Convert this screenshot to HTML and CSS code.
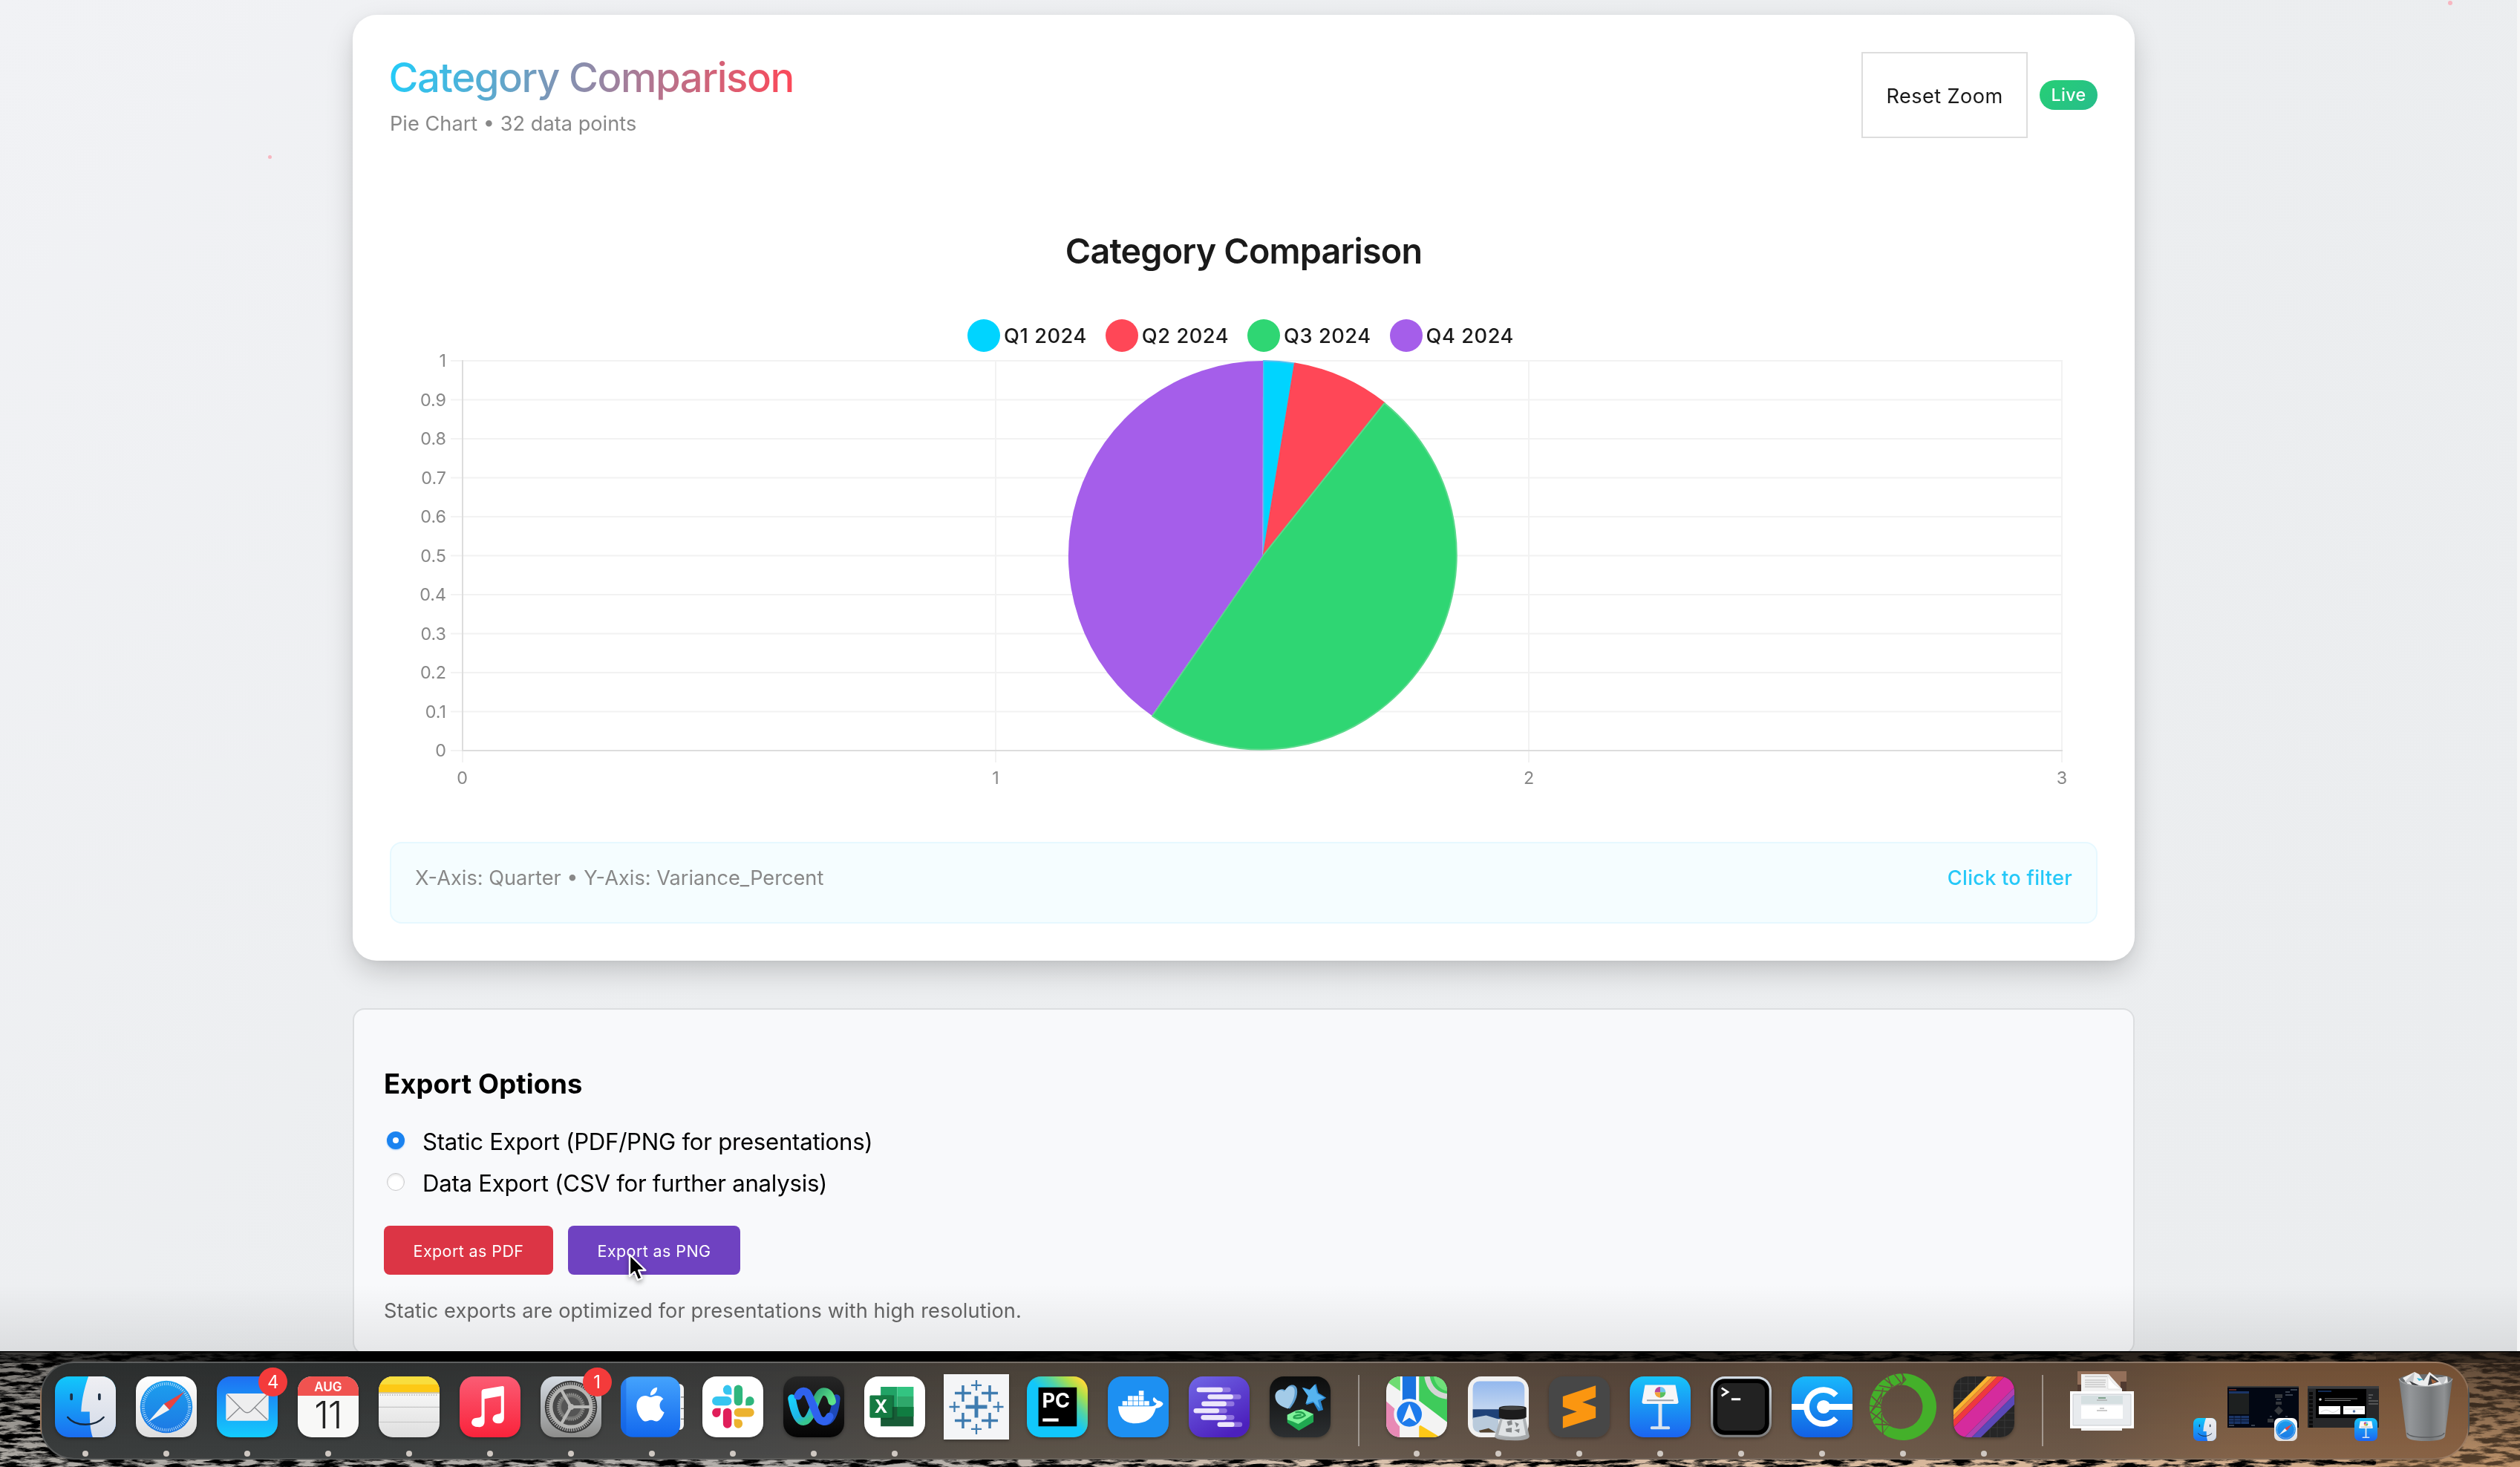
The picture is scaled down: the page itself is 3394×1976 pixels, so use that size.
FILE: index.html
```html
<!DOCTYPE html>
<html lang="en">
<head>
<meta charset="utf-8">
<title>Category Comparison</title>
<link rel="stylesheet" href="styles.css">
</head>
<body>
<main class="window">
  <span class="speck speck-left"></span>
  <span class="speck speck-right"></span>
  <section class="card">
    <header class="card-header">
      <div class="heading">
        <h1 class="title">Category Comparison</h1>
        <p class="subtitle">Pie Chart • 32 data points</p>
      </div>
      <div class="actions">
        <button class="reset">Reset Zoom</button>
        <span class="live">Live</span>
      </div>
    </header>
    <h2 class="chart-title">Category Comparison</h2>
    <ul class="legend">
      <li class="key"><i class="swatch cyan"></i>Q1 2024</li>
      <li class="key"><i class="swatch red"></i>Q2 2024</li>
      <li class="key"><i class="swatch green"></i>Q3 2024</li>
      <li class="key"><i class="swatch purple"></i>Q4 2024</li>
    </ul>
    <svg class="plot" viewBox="525 474 2300 606">
      <g class="grid">
        <path d="M607 486H2778M607 538.5H2778M607 591H2778M607 643.5H2778M607 696H2778M607 748.5H2778M607 801H2778M607 853.5H2778M607 906H2778M607 958.5H2778M607 1011H2778"/>
        <path d="M623 486V1027M1341 486V1027M2059 486V1027M2777 486V1027"/>
      </g>
      <path class="axis" d="M623 485V1011H2778"/>
      <g class="ticks ticks-y">
        <text x="601" y="494">1</text><text x="601" y="546.5">0.9</text><text x="601" y="599">0.8</text><text x="601" y="651.5">0.7</text><text x="601" y="704">0.6</text><text x="601" y="756.5">0.5</text><text x="601" y="809">0.4</text><text x="601" y="861.5">0.3</text><text x="601" y="914">0.2</text><text x="601" y="966.5">0.1</text><text x="601" y="1019">0</text>
      </g>
      <g class="ticks ticks-x">
        <text x="622.5" y="1056">0</text><text x="1341" y="1056">1</text><text x="2059" y="1056">2</text><text x="2777" y="1056">3</text>
      </g>
      <g class="slices">
        <path fill="#00d4ff" stroke="#4fc0f2" d="M1701.5 748.5V486A262.5 262.5 0 0 1 1743.9 489.5Z"/>
        <path fill="#ff4757" stroke="#ff4757" d="M1701.5 748.5L1743.9 489.5A262.5 262.5 0 0 1 1864.9 543.1Z"/>
        <path fill="#2fd673" stroke="#5bd98c" d="M1701 748.5L1864.5 543.1A262.5 262.5 0 0 1 1551.9 964.3Z"/>
        <path fill="#a55eea" d="M1700.5 748.5L1551.2 963.8A262.5 262.5 0 0 1 1701 486Z"/>
      </g>
    </svg>
    <div class="info">
      <span class="axes">X-Axis: Quarter • Y-Axis: Variance_Percent</span>
      <span class="filter">Click to filter</span>
    </div>
  </section>

  <section class="export">
    <h3 class="export-title">Export Options</h3>
    <label class="option"><i class="radio checked"></i>Static Export (PDF/PNG for presentations)</label>
    <label class="option"><i class="radio"></i>Data Export (CSV for further analysis)</label>
    <div class="buttons">
      <button class="btn pdf">Export as PDF</button>
      <button class="btn png">Export as PNG</button>
    </div>
    <p class="note">Static exports are optimized for presentations with high resolution.</p>
  </section>
  <svg class="cursor" viewBox="0 0 28 40"><path d="M2 2V31L8.6 25.2L13 36L18.6 33.6L14 23H23.4Z"/></svg>
</main>

<footer class="desktop">
  <svg class="wallpaper" viewBox="0 0 3394 156" preserveAspectRatio="none">
    <defs>
      <filter id="rock" x="0" y="0" width="100%" height="100%" color-interpolation-filters="sRGB">
        <feTurbulence type="fractalNoise" baseFrequency="0.035 0.17" numOctaves="5" seed="8"/>
        <feColorMatrix values="4.6 0 0 0 -1.75  4.6 0 0 0 -1.75  4.6 0 0 0 -1.75  0 0 0 0 1"/>
      </filter>
      <linearGradient id="tone"><stop offset="0" stop-color="#b0aca6"/><stop offset=".35" stop-color="#b4b0ac"/><stop offset=".55" stop-color="#dcc4ae"/><stop offset=".85" stop-color="#d8b595"/><stop offset="1" stop-color="#c29a74"/></linearGradient>
      <linearGradient id="shade"><stop offset="0" stop-opacity=".45"/><stop offset=".1" stop-opacity=".82"/><stop offset=".14" stop-opacity="1"/><stop offset=".38" stop-opacity="1"/><stop offset=".5" stop-opacity=".86"/><stop offset=".85" stop-opacity=".72"/><stop offset="1" stop-opacity=".35"/></linearGradient>
      <linearGradient id="veil" x2="0" y2="1"><stop offset="0" stop-opacity=".35"/><stop offset="1" stop-opacity="0"/></linearGradient>
      <linearGradient id="brown" x2="0" y2="1"><stop offset="0" stop-color="#5a4333" stop-opacity=".6"/><stop offset="1" stop-color="#b98a5e" stop-opacity=".45"/></linearGradient>
    </defs>
    <rect width="3394" height="156" filter="url(#rock)"/>
    <rect class="multiply" width="3394" height="156" fill="url(#tone)"/>
    <rect x="3200" width="194" height="156" fill="url(#brown)"/>
    <rect width="3394" height="156" fill="url(#veil)"/>
    <rect width="3394" height="16" fill="url(#shade)"/>
    <rect width="3394" height="1.5"/>
  </svg>

  <svg class="defs" width="0" height="0">
    <defs>
      <linearGradient id="gFinder" x2="0" y2="1"><stop offset="0" stop-color="#12c8fb"/><stop offset="1" stop-color="#1b6df0"/></linearGradient>
      <linearGradient id="gFace" x2="0" y2="1"><stop offset="0" stop-color="#efeff3"/><stop offset="1" stop-color="#d3dbe8"/></linearGradient>
      <linearGradient id="gWhite" x2="0" y2="1"><stop offset="0" stop-color="#fff"/><stop offset="1" stop-color="#dedede"/></linearGradient>
      <linearGradient id="gBlue" x2="0" y2="1"><stop offset="0" stop-color="#1ca0ee"/><stop offset="1" stop-color="#1d78e4"/></linearGradient>
      <linearGradient id="gMail" x2="0" y2="1"><stop offset="0" stop-color="#1e6ff2"/><stop offset="1" stop-color="#14ccfd"/></linearGradient>
      <linearGradient id="gKey" x2="0" y2="1"><stop offset="0" stop-color="#18c4f9"/><stop offset="1" stop-color="#1b64f0"/></linearGradient>
      <linearGradient id="gMusic" x2="0" y2="1"><stop offset="0" stop-color="#fb5c74"/><stop offset="1" stop-color="#fa233b"/></linearGradient>
      <linearGradient id="gGear" x2="0" y2="1"><stop offset="0" stop-color="#d5dbe3"/><stop offset="1" stop-color="#8d8d8b"/></linearGradient>
      <linearGradient id="gBook" x2="0" y2="1"><stop offset="0" stop-color="#44a3fd"/><stop offset="1" stop-color="#1268ee"/></linearGradient>
      <linearGradient id="gDark" x2="0" y2="1"><stop offset="0" stop-color="#262626"/><stop offset="1" stop-color="#040404"/></linearGradient>
      <linearGradient id="gDark2" x2="0" y2="1"><stop offset="0" stop-color="#0c0d0d"/><stop offset="1" stop-color="#2c2f31"/></linearGradient>
      <linearGradient id="gPy" x1="0" y1="1" x2="1" y2="0"><stop offset=".5" stop-color="#11c7fb"/><stop offset=".66" stop-color="#4fd3a8"/><stop offset=".8" stop-color="#a9df4e"/><stop offset=".92" stop-color="#fbd93a"/></linearGradient>
      <linearGradient id="gViolet" x2=".6" y2="1"><stop offset="0" stop-color="#7167e6"/><stop offset="1" stop-color="#4c20bd"/></linearGradient>
      <linearGradient id="gSky" x2="0" y2="1"><stop offset="0" stop-color="#93b8ee"/><stop offset="1" stop-color="#c3d6f0"/></linearGradient>
      <linearGradient id="gSteel" x2="0" y2="1"><stop offset="0" stop-color="#d4dde6"/><stop offset="1" stop-color="#7b7b7b"/></linearGradient>
      <linearGradient id="gC" x2="0" y2="1"><stop offset="0" stop-color="#18b8fc"/><stop offset="1" stop-color="#1260e4"/></linearGradient>
      <linearGradient id="gBin"><stop offset="0" stop-color="#75787a"/><stop offset=".2" stop-color="#94979a"/><stop offset=".6" stop-color="#747779"/><stop offset=".85" stop-color="#909294"/><stop offset="1" stop-color="#666869"/></linearGradient>
      <linearGradient id="gWave1" x2=".6" y2="1"><stop offset="0" stop-color="#18d2fb"/><stop offset=".7" stop-color="#1fb5e8"/><stop offset="1" stop-color="#37c58e"/></linearGradient>
      <linearGradient id="gWave3" x2="1" y2=".6"><stop offset="0" stop-color="#2a9e72"/><stop offset="1" stop-color="#5ee58a"/></linearGradient>
    </defs>
    <symbol id="finder" viewBox="0 0 100 100">
      <path fill="url(#gFinder)" d="M0 0H100V100H0Z"/>
      <path fill="url(#gFace)" d="M55 0C49 17 44 36 43 58H57C57 74 58 88 62 100H100V0Z"/>
      <path fill="none" stroke="#1d2f44" stroke-width="4.5" stroke-linecap="round" d="M27 30V37M73 30V37"/>
      <path fill="none" stroke="#16283c" stroke-width="3" stroke-linecap="round" d="M21 67C34 83 66 83 80 67"/>
    </symbol>
    <symbol id="safari" viewBox="0 0 100 100">
      <path fill="url(#gWhite)" d="M0 0H100V100H0Z"/>
      <circle cx="50" cy="50" r="43" fill="url(#gBlue)"/>
      <circle cx="50" cy="50" r="38" fill="none" stroke="#cde8fb" stroke-width="5" stroke-dasharray="1 2.3"/>
      <path fill="#e8433f" d="M80 25L46 45L55 55Z"/>
      <path fill="#f2f2f2" d="M20 75L46 45L55 55Z"/>
    </symbol>
    <symbol id="keynote" viewBox="0 0 100 100">
      <path fill="url(#gKey)" d="M0 0H100V100H0Z"/>
      <path fill="#dfe6ee" d="M47 44H53V84H47Z"/><rect x="34" y="82" width="32" height="5" rx="2" fill="#d9e3ee"/>
      <path fill="#f6f6f8" d="M25 14H75L80 42Q80 45 77 45H23Q20 45 20 42Z"/><path fill="#9aa3ad" d="M28 38H72V40.500H28Z"/>
      <path fill="#6ec6f0" d="M50 26V17A9 9 0 0 1 59 26Z"/><path fill="#58c060" d="M50 26H59A9 9 0 0 1 50 35Z"/><path fill="#f2a33a" d="M50 26V35A9 9 0 0 1 41 26Z"/><path fill="#b8479a" d="M50 26H41A9 9 0 0 1 50 17Z"/>
    </symbol>
  </svg>

  <nav class="dock">
    <div class="app"><svg class="icon"><use href="#finder"/></svg><i class="dot"></i></div>
    <div class="app"><svg class="icon"><use href="#safari"/></svg><i class="dot"></i></div>
    <div class="app"><svg class="icon" viewBox="0 0 100 100"><path fill="url(#gMail)" d="M0 0H100V100H0Z"/><rect x="15" y="28" width="70" height="45" rx="4" fill="#eeeeef"/><path fill="none" stroke="#8b8d91" stroke-width="1.800" d="M17 71L38 51M83 71L62 51M17 30L44 57Q50 62 56 57L83 30"/></svg><b class="badge">4</b><i class="dot"></i></div>
    <div class="app"><div class="icon calendar"><span class="month">AUG</span><span class="day">11</span></div><i class="dot"></i></div>
    <div class="app"><svg class="icon" viewBox="0 0 100 100"><path fill="url(#gWhite)" d="M0 0H100V100H0Z"/><path fill="#fdc915" d="M0 0H100V26H0Z"/><path fill="#f8de3e" d="M0 0H100V13H0Z"/><path stroke="#b8a877" stroke-width="1.500" d="M0 27H100"/><path stroke="#a9a9a9" stroke-width="2" stroke-dasharray="1.500 2.500" d="M2 30.500H98"/><path stroke="#c6c6c6" stroke-width="1.500" d="M0 50.500H100M0 75H100"/></svg><i class="dot"></i></div>
    <div class="app"><svg class="icon" viewBox="0 0 100 100"><path fill="url(#gMusic)" d="M0 0H100V100H0Z"/><path fill="#fff" d="M36 25Q36 22 39 21L70 16Q73 15.500 73 18V68C73 76 67 78 62 77C54 76 52 69 57 64C61 61 68 63 68 58V32L41 37V74C41 81 36 84 29 83C20 82 17 76 22 70C27 66 36 70 36 63Z"/></svg><i class="dot"></i></div>
    <div class="app"><svg class="icon" viewBox="0 0 100 100"><path fill="url(#gGear)" d="M0 0H100V100H0Z"/><circle cx="50" cy="50" r="43" fill="#3a3a3a"/><circle cx="50" cy="50" r="38" fill="none" stroke="#aaa" stroke-width="5" stroke-dasharray="1.800 1.800"/><circle cx="50" cy="50" r="33" fill="#484848" stroke="#b4b4b2" stroke-width="6"/><circle cx="50" cy="50" r="21" fill="#747472" stroke="#8c8c8a" stroke-width="4" stroke-dasharray="2 1.500"/><circle cx="50" cy="50" r="16" fill="#555"/><path stroke="#b9b9b7" stroke-width="5" d="M50 50H82M50 50L34 22M50 50L34 78"/><circle cx="50" cy="50" r="5" fill="#b9b9b7"/></svg><b class="badge">1</b><i class="dot"></i></div>
    <div class="app"><svg class="icon book" viewBox="0 0 104 100"><rect x="70" y="12" width="34" height="76" rx="8" fill="#f2f2f2"/><path stroke="#777" stroke-width="1.500" d="M99 34H104M99 53H104M99 70H104"/><rect width="98" height="100" rx="20" fill="url(#gBook)"/><path fill="#0f5cdc" opacity=".45" d="M9 4V96Q0 92 0 80V20Q0 8 9 4Z"/><path fill="#fff" transform="translate(21 18) scale(2.330)" d="M12.152 6.896c-.948 0-2.415-1.078-3.960-1.040-2.040.027-3.910 1.183-4.961 3.014-2.117 3.675-.546 9.103 1.519 12.090 1.013 1.454 2.208 3.090 3.792 3.039 1.520-.065 2.090-.987 3.935-.987 1.831 0 2.350.987 3.960.948 1.637-.026 2.676-1.480 3.676-2.948 1.156-1.688 1.636-3.325 1.662-3.415-.039-.013-3.182-1.221-3.220-4.857-.026-3.040 2.480-4.494 2.597-4.559-1.429-2.090-3.623-2.324-4.390-2.376-2-.156-3.675 1.090-4.610 1.090zM15.530 3.830c.843-1.012 1.400-2.427 1.245-3.830-1.207.052-2.662.805-3.532 1.818-.780.896-1.454 2.338-1.273 3.714 1.338.104 2.715-.688 3.559-1.701"/></svg><i class="dot"></i></div>
    <div class="app"><svg class="icon" viewBox="0 0 100 100"><path fill="#fff" d="M0 0H100V100H0Z"/><g fill="#36c5f0"><path d="M48 30H41A7 8 0 1 1 48 22Z"/><rect x="16" y="33" width="32" height="15" rx="7.500"/></g><g fill="#2eb67d"><rect x="52" y="14" width="14" height="34" rx="7"/><path d="M71 48V40.500A7 7.500 0 1 1 78 48Z"/></g><g fill="#e01e5a"><path d="M30 52V59.500A7 7.500 0 1 1 23 52Z"/><rect x="34" y="52" width="14" height="33" rx="7"/></g><g fill="#ecb22e"><rect x="52" y="52" width="33" height="14.500" rx="7.200"/><path d="M52 70H59A7 7.500 0 1 1 52 77.500Z"/></g></svg><i class="dot"></i></div>
    <div class="app"><svg class="icon" viewBox="0 0 100 100"><path fill="url(#gDark)" d="M0 0H100V100H0Z"/><g fill="none" stroke-width="13" stroke-linecap="round"><path stroke="#1d49b8" d="M87 36C85 58 79 74 68 74"/><path stroke="url(#gWave3)" d="M50 50C56 34 60 25 66 25C74 25 78 31 80 41"/><path stroke="url(#gWave1)" d="M14 36C18 60 24 74 33 74C41 74 46 62 51 48"/><path stroke="#2f62ee" d="M24 32C28 23 38 20 43 34L55 63C59 75 70 78 76 66"/></g></svg><i class="dot"></i></div>
    <div class="app"><svg class="icon" viewBox="0 0 100 100"><path fill="#fff" d="M0 0H100V100H0Z"/><path fill="#21a366" d="M27 17H54V50H27Z"/><path fill="#33c481" d="M54 17H81V33H54Z"/><path fill="#2fa86b" d="M54 33H81V50H54Z"/><path fill="#185c37" d="M27 50H81V82H27Z"/><path fill="#107c41" d="M54 50H81V66H54Z"/><path fill="#0b4a28" d="M27 31H49V71H27Z" opacity=".6"/><rect x="9" y="31" width="37" height="37" rx="2" fill="#157a42"/><text class="glyph" x="27.500" y="60" font-size="29">X</text></svg><i class="dot"></i></div>
    <div class="app"><svg class="icon square" viewBox="0 0 100 100"><path fill="#f4f5f7" d="M0 0H100V100H0Z"/><g stroke="#3f7cb0" fill="none"><path stroke-width="5.600" d="M33.500 50H66.500M50 33.500V66.500"/><path stroke-width="4" d="M17 29H42M29.500 17V42M58 29H83M70.500 17V42M17 71H42M29.500 59V83M58 71H83M70.500 59V83"/><path stroke-width="2.600" d="M42 17H58M50 9V25M42 84H58M50 76V92M8.500 50H24.500M16.500 42V58M75.500 50H91.500M83.500 42V58"/></g></svg></div>
    <div class="app"><svg class="icon" viewBox="0 0 100 100"><path fill="url(#gPy)" d="M0 0H100V100H0Z"/><path d="M19 18H82V82H19Z"/><path fill="#fff" d="M26 69H52V74H26Z"/><text class="glyph" x="48" y="51" font-size="33">PC</text></svg></div>
    <div class="app"><svg class="icon" viewBox="0 0 100 100"><path fill="#1d90f2" d="M0 0H100V100H0Z"/><g fill="#fff"><path d="M17 49H72C77 49 80 46 80 44C73 42 73 36 76 34L82 40C86 40 90 42 91 45C88 51 82 52 79 52C74 70 62 77 44 77C28 77 18 68 17 49Z"/><path d="M24 40.500H32V48H24ZM33 40.500H41V48H33ZM42 40.500H50V48H42ZM51 40.500H59V48H51ZM60 40.500H68V48H60ZM33 32H41V39.500H33ZM42 32H50V39.500H42ZM51 32H59V39.500H51ZM51 23.500H59V31H51Z"/></g></svg></div>
    <div class="app"><svg class="icon" viewBox="0 0 100 100"><path fill="url(#gViolet)" d="M0 0H100V100H0Z"/><g fill="#a48be8" opacity=".75"><rect x="30" y="18" width="39" height="8" rx="4"/><rect x="45" y="29.500" width="41" height="8" rx="4"/><rect x="35" y="41" width="40" height="8" rx="4"/><rect x="25" y="52.500" width="38" height="8" rx="4"/><rect x="35" y="63.500" width="40" height="8" rx="4"/><rect x="55" y="75" width="33" height="8" rx="4"/></g><g fill="#ece6fb"><rect x="13" y="18" width="43" height="8" rx="4"/><rect x="31" y="29.500" width="42" height="8" rx="4"/><rect x="21" y="41" width="41" height="8" rx="4"/><rect x="8" y="52.500" width="42" height="8" rx="4"/><rect x="20" y="63.500" width="42" height="8" rx="4"/><rect x="47" y="75" width="28" height="8" rx="4"/></g></svg></div>
    <div class="app"><svg class="icon" viewBox="0 0 100 100"><path fill="url(#gDark2)" d="M0 0H100V100H0Z"/><path fill="#5f9fd0" d="M33 53C18 49 10 41 11 30C12 21 21 19 26 23C30 12 43 11 45 21C47 33 40 45 33 53Z"/><path fill="#a3cbe8" d="M30 53C16 49 9 42 9 32C10 22 19 20 24 25C29 14 40 14 41 23C42 34 36 46 30 53Z"/><path fill="#2a86cf" d="M55 18L67 22L76 12L80 27L93 35L84 41L88 55L80 57L72 43L60 47L64 33Z"/><path fill="#56b4f0" d="M53 18L65 23L74 13L78 28L90 35L79 39L83 53L71 41L59 45L63 32Z"/><path fill="#1fa850" d="M29 63V76L48 89L72 75V62Z"/><path fill="#7ff29a" d="M29 63L43 56L54 54L72 62L52 75L47 78L38 74L29 71Z"/><path fill="none" stroke="#24a350" stroke-width="3" d="M42 59Q55 57 58 64Q50 70 40 68Q38 64 52 63"/></svg></div>
    <i class="divider"></i>
    <div class="app"><svg class="icon" viewBox="0 0 100 100"><path fill="#f3f3f3" d="M0 0H100V100H0Z"/><path fill="#6fdc72" d="M0 0H23V24L0 8Z"/><path fill="#3fcb5b" d="M54 0H100V75L54 40Z"/><path fill="#6fe07a" d="M78 0H100V24Q82 20 78 0Z"/><path fill="none" stroke="#d5d5d5" stroke-width="9" d="M67 0Q72 29 100 33"/><path fill="#1a73e0" d="M26 0H49V55H26Z"/><path stroke="#fff" stroke-width="3" d="M25 0V42M51 0V42"/><path fill="#e889b5" d="M0 41L22 60V100H0Z"/><path fill="#fdc817" d="M54 79L89 100H54Z"/><circle cx="38" cy="62" r="23" fill="#1d7bec" stroke="#f2f4f7" stroke-width="5"/><path fill="#f5f7fa" d="M38 45L50 76L38 68L26 76Z"/></svg><i class="dot"></i></div>
    <div class="app"><svg class="icon loupe" viewBox="0 0 100 106"><rect width="100" height="100" rx="22" fill="#f1f1f1"/><path fill="url(#gSky)" d="M20 8H80Q93 8 93 20V54H8V20Q8 8 20 8Z"/><path fill="#1f4278" d="M8 54H93V70H8Z"/><path fill="#b9cadb" d="M8 68L30 64L50 70V92H18Q8 90 8 80Z"/><path fill="#54432f" d="M18 89L34 85L46 92H20Z"/><path fill="#a9adb0" opacity=".94" d="M54 66H94L101 98Q101 105 76 105Q44 105 44 98Z"/><path fill="#dfe2e4" d="M57 70H90L95 96Q78 102 50 96Z"/><path fill="#85888a" d="M64 74L72 72L73 79L66 81ZM77 75L84 78L80 84ZM62 86L72 84V92L63 91ZM76 88L85 86L84 93Z"/><path fill="#1c1c1c" d="M51 52Q51 48 73 48Q96 48 96 52V67Q90 71 73 71Q55 71 51 67Z"/><ellipse cx="73" cy="52" rx="20" ry="3" fill="#444"/></svg><i class="dot"></i></div>
    <div class="app"><svg class="icon" viewBox="0 0 100 100"><path fill="#474747" d="M0 0H100V100H0Z"/><path fill="#fb9610" d="M23 33L77 15V34L55 42.500L77 50V68L23 85V66L46 58L23 50Z"/></svg><i class="dot"></i></div>
    <div class="app"><svg class="icon"><use href="#keynote"/></svg><i class="dot"></i></div>
    <div class="app"><svg class="icon" viewBox="0 0 100 100"><path fill="url(#gSteel)" d="M0 0H100V100H0Z"/><rect x="4" y="4" width="92" height="92" rx="19"/><rect x="11" y="11" width="78" height="78" rx="12" fill="#222"/><path fill="none" stroke="#fff" stroke-width="3.400" d="M18 19L28 25.500L18 32M34 37.500H49"/></svg><i class="dot"></i></div>
    <div class="app"><svg class="icon" viewBox="0 0 100 100"><path fill="url(#gC)" d="M0 0H100V100H0Z"/><path fill="none" stroke="#fff" stroke-width="9.500" d="M0 50H26M52 50H100M73 31A28 28 0 1 0 73 69"/><circle cx="52.500" cy="50" r="11" fill="#fff"/></svg><i class="dot"></i></div>
    <div class="app"><svg class="icon ring" viewBox="0 0 100 100"><path fill="#44b02a" d="M50 0A50 50 0 1 1 20 90L29 78A33 33 0 1 0 48 17L52 9Z"/><circle cx="50" cy="50" r="41.500" fill="none" stroke="#44b02a" stroke-width="17" stroke-dasharray="102 300" transform="rotate(128 50 50)"/><path class="mesh" d="M46 -2L54 9L46 18M36 0L47 14L34 22M22 8L36 19M14 18L34 22L26 2M6 25L28 27L18 38M3 34L22 52L0 48M20 22L16 42L-2 62M18 30L2 58L30 78M22 52L4 70M8 76L32 77M18 60L20 92"/></svg><i class="dot"></i></div>
    <div class="app"><svg class="icon" viewBox="0 0 100 100"><path fill="#262626" d="M0 0H100V100H0Z"/><path stroke="#3b3b3b" d="M0 12H100M0 24H100M0 36H100M0 60H100M0 72H100M0 84H100M12 0V100M24 0V100M36 0V100M60 0V100M72 0V100M84 0V100"/><path fill="#f9b532" d="M0 55L55 0H64L0 64Z"/><path fill="#f48a30" d="M0 64L64 0H72L0 72Z"/><path fill="#ef3640" d="M0 72L72 0H84L0 84Z"/><path fill="#d52b9d" d="M0 84L84 0H100V18L18 100H0Z"/><path fill="#b13fb0" d="M18 100L100 18V30L30 100Z"/><path fill="#5a48b8" d="M30 100L100 30V46L45 100Z"/></svg><i class="dot"></i></div>
    <i class="divider"></i>
    <svg class="stack" viewBox="0 0 86 82"><path fill="#94705a" d="M10 0H76V30H10Z"/><path fill="#513b31" d="M10 18H22V28H10ZM68 14H76V28H68Z"/><path fill="#f1f1f1" d="M15 4H52L70 24V80H15Z"/><path stroke="#b4b4b4" d="M20 7H50M20 12H48M20 15H48M20 18H47M20 21H48"/><path fill="#fff" stroke="#ccc" stroke-width=".5" d="M51 5V24H70Q56 18 51 5Z"/><path fill="#fff" d="M0 27H86V77H0Z"/><path fill="#e8ebee" stroke="#c8cbd0" d="M4 31H82V73H4Z"/><path fill="#d5dfe1" d="M15 33H71V44H15Z"/><path fill="#fff" d="M15 46H71V64H15Z"/><path stroke="#7fa08c" stroke-width="2" d="M38 36H48"/><path stroke="#999" d="M36 39H50M40 50H46M36 53H50"/></svg>
    <svg class="mini mini-finder"><use href="#finder"/></svg>
    <div class="thumb">
      <svg class="screen" viewBox="0 0 96 56"><path fill="#020713" d="M0 0H96V56H0Z"/><path stroke="#393939" stroke-width="2" d="M0 1H96"/><path fill="#1d2020" d="M2 8H29V38H2Z"/><path fill="#1b3566" d="M2 7H29V10H2ZM2 40H29V51H2Z"/><path stroke="#0b1730" d="M2 43.500H29M2 47H29M9 40V51M18 40V51"/><path stroke="#b54a30" d="M2 5H12"/><path fill="#34373c" d="M64 11H74V16H64ZM65 21H73V25H65ZM69 27L75 33L69 39L63 33ZM54 44H62V49H54Z"/><path stroke="#8a97a8" stroke-width=".8" d="M78 8H84M78 12H88M66 18H72M57 41H60M78 41H81M32 53H37M2 53H9M85 5H94"/></svg>
      <svg class="mini"><use href="#safari"/></svg>
    </div>
    <div class="thumb">
      <svg class="screen" viewBox="0 0 96 56"><path fill="#262729" d="M0 0H96V56H0Z"/><path fill="#3c3d3f" d="M0 0H96V3.500H0Z"/><path fill="#000" d="M11 4H79V43H11Z"/><path stroke="#0a0a0a" stroke-width="5" stroke-dasharray="4 1.500" d="M4.500 8V56"/><path fill="#fff" d="M15 27H44V38H15ZM48 27H77V38H48Z"/><path stroke="#2457a8" d="M14 7H32"/><path stroke="#999" stroke-width=".8" d="M23 17H67M23 19.500H58M82 12H88M82 16H86M82 20H95M82 24H95"/><circle cx="17" cy="18" r="1.800" fill="#ccc"/><circle cx="62.500" cy="34" r="1.800" fill="#5876a8"/><path fill="none" stroke="#bbb" stroke-width=".6" d="M18 35Q25 30 30 34T42 31M50 31H75"/></svg>
      <svg class="mini"><use href="#keynote"/></svg>
    </div>
    <svg class="trash" viewBox="0 0 74 96"><path fill="#6a6d6f" d="M1 12Q4 5 37 5Q70 5 73 12L71 22H3Z"/><path fill="#ededed" d="M6 10L22 2L28 5L34 14L42 2L52 10L66 8L67 18L40 22L14 20Z"/><path fill="#c4c6c9" d="M22 2L20 16L8 16ZM52 10L60 20L66 8Z"/><path fill="#3c3d40" d="M15 14L30 21H20ZM43 6L55 15L40 20Z"/><path fill="#35b5d8" d="M25 10L34 12L28 14Z"/><path fill="#a4643c" d="M44 11L52 15L46 18Z"/><path fill="url(#gBin)" d="M1 11Q4 20 37 21.500Q70 20 73 11L63 88Q62 95 37 95Q12 95 11 88Z"/><path fill="none" stroke="#a4a7a9" stroke-width="1.200" d="M1 11Q4 20 37 21.500Q70 20 73 11"/><path fill="none" stroke="#5c5e60" stroke-width="1.500" d="M12 84Q14 90 37 90Q60 90 62 84"/></svg>
  </nav>
</footer>
</body>
</html>
```
FILE: styles.css
```css
* { box-sizing: border-box; margin: 0; padding: 0; }

body {
  width: 3394px;
  height: 1976px;
  overflow: hidden;
  display: flex;
  flex-direction: column;
  font-family: Inter, "Liberation Sans", sans-serif;
  color: #1a1a1a;
}

button { font-family: inherit; }

/* Browser window */
.window {
  position: relative;
  flex: none;
  height: 1820px;
  overflow: hidden;
  padding: 20px 515px 0 475px;
  background: linear-gradient(135deg, #f1f2f5 0%, #eceef0 45%, #ebedef 100%);
  border-right: 4px solid #f6f6f6;
}
.window::after {
  content: "";
  position: absolute;
  inset: auto 0 0 0;
  height: 90px;
  background: linear-gradient(rgba(0, 0, 0, 0), rgba(0, 0, 0, .075));
}
.speck { position: absolute; width: 6px; height: 6px; border-radius: 50%; background: #f7b6c0; }
.speck-left { left: 361px; top: 209px; width: 5px; height: 5px; }
.speck-right { left: 3297px; top: 1px; }

/* Chart card */
.card {
  height: 1274px;
  padding: 50px;
  border-radius: 32px;
  background: #fff;
  box-shadow: 0 16px 40px -4px rgba(0, 0, 0, .2), 0 2px 10px rgba(0, 0, 0, .05);
}
.card-header { display: flex; justify-content: space-between; align-items: flex-start; height: 116px; }
.title {
  margin-top: 2px;
  width: 545px;
  font-size: 54.5px;
  line-height: 64px;
  font-weight: 500;
  letter-spacing: -1.43px;
  white-space: nowrap;
  text-indent: -1.5px;
  background: linear-gradient(100deg, #22ccf9, #ff4757);
  -webkit-background-clip: text;
  background-clip: text;
  color: transparent;
}
.subtitle { margin-top: 11px; font-size: 27.2px; line-height: 40px; letter-spacing: 0; color: #888; }
.actions { display: flex; align-items: center; gap: 16px; }
.reset {
  width: 224px;
  height: 116px;
  padding-top: 2px;
  border: 2px solid #ddd;
  background: #fff;
  color: #1a1a1a;
  font-size: 27.2px;
  letter-spacing: .4px;
}
.live {
  width: 78px;
  height: 40px;
  border-radius: 20px;
  background: linear-gradient(135deg, #26cf75, #27bd8b);
  color: #fff;
  font-size: 23.3px;
  font-weight: 500;
  line-height: 39px;
  letter-spacing: .3px;
  text-align: center;
}
.chart-title {
  margin-top: 124px;
  font-size: 46.7px;
  line-height: 56px;
  font-weight: 600;
  letter-spacing: -.83px;
  text-align: center;
}
.legend {
  display: flex;
  justify-content: center;
  gap: 25px;
  margin: 64px 8px 0 0;
  list-style: none;
}
.key { display: flex; gap: 5px; font-size: 27.2px; font-weight: 450; line-height: 45px; letter-spacing: .55px; }
.swatch { width: 44px; height: 44px; border-radius: 50%; }
.cyan { background: #00d4ff; }
.red { background: #ff4757; }
.green { background: #2fd673; }
.purple { background: #a55eea; }

.plot { display: block; width: 2300px; height: 606px; margin-top: -1px; overflow: visible; }
.grid { stroke: #f2f2f2; stroke-width: 2; }
.axis { fill: none; stroke: #ddd; stroke-width: 2; }
.ticks { font-size: 23.3px; fill: #888; }
.ticks-y { text-anchor: end; }
.ticks-x { text-anchor: middle; }
.slices { stroke-width: 2; stroke-linejoin: bevel; }

.info {
  display: flex;
  justify-content: space-between;
  height: 110px;
  margin-top: 54px;
  padding: 27px 32px;
  border: 2px solid #e6f8ff;
  border-radius: 16px;
  background: #f5fdff;
  font-size: 27.2px;
  line-height: 40px;
}
.axes { color: #888; letter-spacing: 0; }
.filter { color: #25c8f8; font-weight: 500; letter-spacing: .25px; }

/* Export card */
.export {
  height: 466px;
  margin-top: 64px;
  padding: 78px 40px 0;
  border: 2px solid #dcdee0;
  border-radius: 16px;
  background: #f8f9fb;
}
.export-title { font-size: 36.4px; line-height: 44px; font-weight: 700; letter-spacing: .15px; color: #000; margin-bottom: 36px; }
.option { display: flex; height: 40px; margin-bottom: 16px; font-size: 31.2px; line-height: 40px; letter-spacing: -.28px; color: #000; }
.radio {
  width: 24px;
  height: 24px;
  margin: 6px 24px 0 4px;
  border-radius: 50%;
  background: #fff;
  border: 1px solid #c9c9cb;
  box-shadow: inset 0 2px 3px rgba(0, 0, 0, .1);
}
.radio.checked { border: 8px solid #1a83f0; box-shadow: 0 1px 2px rgba(26, 131, 240, .4); }
.buttons { display: flex; gap: 20px; margin-top: 37px; }
.btn {
  height: 66px;
  padding-top: 2px;
  border: 0;
  border-radius: 8px;
  color: #fff;
  font-size: 21.5px;
  letter-spacing: .4px;
}
.pdf { width: 228px; background: #dc3545; }
.png { width: 232px; background: #6f42c1; }
.note { margin-top: 29px; font-size: 27.2px; line-height: 40px; letter-spacing: .1px; color: #666; }

.cursor { position: absolute; z-index: 2; left: 846px; top: 1688px; width: 28px; height: 40px; overflow: visible; filter: drop-shadow(0 3px 3px rgba(0, 0, 0, .35)); }
.cursor path { stroke: #fff; stroke-width: 2.4; stroke-linejoin: round; }

/* Desktop and dock */
.desktop { position: relative; flex: none; height: 156px; padding: 14px 68px 10px 54px; background: #000; }
.wallpaper { position: absolute; inset: 0; width: 100%; height: 100%; }
.multiply { mix-blend-mode: multiply; }
.defs { position: absolute; }

.dock {
  position: relative;
  display: flex;
  height: 132px;
  padding-left: 4px;
  border: 2px solid rgba(255, 255, 255, .17);
  border-radius: 46px;
  background:
    linear-gradient(rgba(0, 0, 0, .12), rgba(255, 255, 255, .05)),
    linear-gradient(90deg, #303333 0%, #333636 14%, #40403f 30%, #52493f 40%, #5d5145 52%, #5d4a3d 66%, #665242 72%, #65503f 84%, #7b5a3f 90%, #835a3a 100%);
}
.app { position: relative; flex: none; display: flex; flex-direction: column; align-items: center; width: 109.1px; padding-top: 18px; }
.icon { display: block; flex: none; width: 82px; height: 82px; border-radius: 19px; box-shadow: 0 2px 4px rgba(0, 0, 0, .3); }
.square { width: 88px; height: 88px; margin: -3px 0; border-radius: 0; }
.ring { width: 90px; height: 90px; margin: -4px 0; border-radius: 0; box-shadow: none; }
.book { width: 85px; height: 82px; border-radius: 0; box-shadow: none; overflow: visible; }
.loupe { width: 82px; height: 87px; margin-bottom: -5px; border-radius: 0; box-shadow: none; overflow: visible; }
.mesh { fill: none; stroke: #65523f; stroke-width: 1.8; }
.glyph { fill: #fff; font-weight: 700; text-anchor: middle; }
.dot { width: 8px; height: 8px; margin-top: 18px; border-radius: 50%; background: #cfc8c2; }
.badge {
  position: absolute;
  left: 70px;
  top: 6px;
  width: 39px;
  height: 39px;
  border-radius: 50%;
  background: #f43b3b;
  color: #fff;
  font-size: 24px;
  font-weight: 400;
  line-height: 39px;
  text-align: center;
}
.calendar { display: flex; flex-direction: column; overflow: hidden; background: #f8f8f7; text-align: center; }
.month { height: 26px; background: #f05350; color: #fff; font-size: 17px; font-weight: 600; line-height: 28px; }
.day { font-size: 50px; font-weight: 300; line-height: 52px; letter-spacing: -1px; color: #222; }
.divider { flex: none; width: 2px; height: 96px; margin: 16px 23.2px 0; background: rgba(255, 255, 255, .4); }
.stack { flex: none; width: 86px; height: 82px; margin: 11px 66px 0 13px; }
.mini { display: block; width: 31px; height: 31px; border-radius: 7px; }
.mini-finder { flex: none; margin: 74px 15px 0 14px; }
.thumb { position: relative; flex: none; width: 96px; height: 56px; margin: 31px 12px 0 0; }
.screen { display: block; width: 96px; height: 56px; }
.thumb .mini { position: absolute; left: 63px; top: 43px; }
.trash { flex: none; width: 74px; height: 96px; margin: 10px 0 0 14px; }
```
